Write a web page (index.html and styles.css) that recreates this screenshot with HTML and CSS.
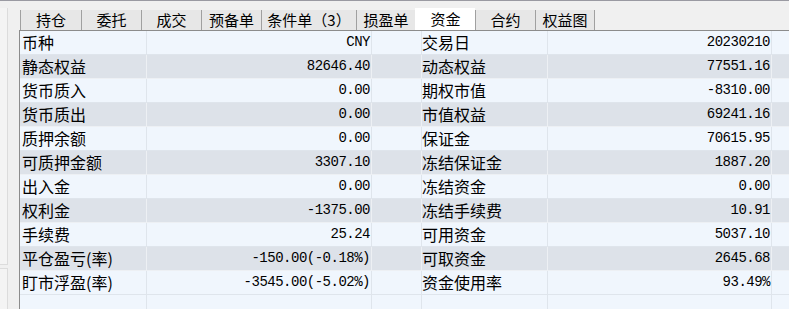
FILE: index.html
```html
<!DOCTYPE html>
<html lang="zh-CN">
  <head>
    <meta charset="UTF-8">
    <title>资金</title>
    <link rel="stylesheet" href="styles.css">
  </head>
  <body>
    <div class="topline"></div>
    <div class="frame">
      <div class="side">
        <div class="side-box upper"></div>
        <div class="side-box lower"></div>
      </div>
      <div class="main">
        <div class="tabs">
          <div class="tab">持仓</div>
          <div class="tab">委托</div>
          <div class="tab">成交</div>
          <div class="tab">预备单</div>
          <div class="tab wide">条件单（3）</div>
          <div class="tab narrow">损盈单</div>
          <div class="tab active">资金</div>
          <div class="tab">合约</div>
          <div class="tab last">权益图</div>
        </div>
        <div class="grid" id="grid"></div>
      </div>
    </div>
    <script>
      const rows = [
        ['币种', 'CNY', '交易日', '20230210'],
        ['静态权益', '82646.40', '动态权益', '77551.16'],
        ['货币质入', '0.00', '期权市值', '-8310.00'],
        ['货币质出', '0.00', '市值权益', '69241.16'],
        ['质押余额', '0.00', '保证金', '70615.95'],
        ['可质押金额', '3307.10', '冻结保证金', '1887.20'],
        ['出入金', '0.00', '冻结资金', '0.00'],
        ['权利金', '-1375.00', '冻结手续费', '10.91'],
        ['手续费', '25.24', '可用资金', '5037.10'],
        ['平仓盈亏(率)', '-150.00(-0.18%)', '可取资金', '2645.68'],
        ['盯市浮盈(率)', '-3545.00(-5.02%)', '资金使用率', '93.49%']
      ];
      const grid = document.getElementById('grid');

      function cell(text, cls) {
        const el = document.createElement('div');
        el.className = 'cell ' + cls;
        el.textContent = text;
        return el;
      }

      rows.forEach((r, i) => {
        const row = document.createElement('div');
        row.className = i % 2 ? 'row alt' : 'row';
        row.appendChild(cell(r[0], 'label'));
        row.appendChild(cell(r[1], 'value'));
        row.appendChild(cell('', 'blank'));
        row.appendChild(cell(r[2], 'label second'));
        row.appendChild(cell(r[3], 'value'));
        row.appendChild(cell('', 'rest'));
        grid.appendChild(row);
      });

      const filler = document.createElement('div');
      filler.className = 'row filler';
      ['label', 'value', 'blank', 'label', 'value', 'rest'].forEach(c => filler.appendChild(cell('', c)));
      grid.appendChild(filler);
    </script>
  </body>
</html>
```

FILE: styles.css
```css
:root {
  --bg: #f0f0f0;
  --tab-bg: #e7e7e7;
  --tab-line: #a0a0a0;
  --frame-line: #8c8c8c;
  --row-light: #f0f6fd;
  --row-dark: #dde2e9;
  --line-light: #dfe5ec;
  --line-dark: #edf0f4;
}

* {
  box-sizing: border-box;
}

body {
  margin: 0;
  background: var(--bg);
  font-family: "Noto Sans CJK SC", "DejaVu Sans", sans-serif;
  color: #000;
  height: 309px;
  overflow: hidden;
}

.topline {
  height: 1px;
  background: #9a9aa2;
}

.frame {
  display: flex;
  height: 308px;
}

.side {
  width: 19px;
  flex-shrink: 0;
  display: flex;
  flex-direction: column;
}

.side-box {
  width: 8px;
  background: #f4f4f4;
  border-right: 1px solid #dcdcdc;
}

.side-box.upper {
  margin-top: 7px;
  height: 257px;
  border-bottom: 1px solid #dcdcdc;
}

.side-box.lower {
  margin-top: 3px;
  flex: 1;
  border-top: 1px solid #dcdcdc;
}

.main {
  flex: 1;
  display: flex;
  flex-direction: column;
  min-width: 0;
}

.tabs {
  display: flex;
  align-items: flex-end;
  height: 30px;
  padding-left: 1px;
  border-bottom: 1px solid var(--frame-line);
}

.tab {
  width: 60px;
  height: 20px;
  background: var(--tab-bg);
  border-left: 1px solid var(--tab-line);
  font-size: 15px;
  line-height: 20px;
  text-align: center;
  white-space: nowrap;
}

.tab:first-child {
  width: 61px;
}

.tab.wide {
  width: 95px;
}

.tab.narrow {
  width: 59px;
}

.tab.active {
  height: 22px;
  line-height: 22px;
  background: #fff;
  border-left-color: #fff;
}

.tab.last {
  border-right: 1px solid var(--tab-line);
}

.grid {
  flex: 1;
  display: flex;
  flex-direction: column;
  border-left: 1px solid var(--frame-line);
}

.row {
  display: grid;
  grid-template-columns: 127px 225px 50px 126px 224px 1fr;
  height: 24px;
  background: var(--row-light);
  border-bottom: 1px solid var(--line-light);
}

.row.alt {
  background: var(--row-dark);
  border-bottom-color: var(--line-dark);
}

.row.filler {
  flex: 1;
  border-bottom: none;
}

.cell {
  border-right: 1px solid var(--line-light);
  font-size: 16px;
  line-height: 22px;
  white-space: nowrap;
}

.row.alt .cell {
  border-right-color: var(--line-dark);
}

.cell.label {
  padding-left: 2px;
}

.cell.second {
  padding-left: 0;
}

.cell.value {
  text-align: right;
  padding-right: 1px;
  font-family: "Liberation Mono", monospace;
  font-size: 14px;
  letter-spacing: -0.5px;
  line-height: 22px;
}

.cell.rest {
  border-right: none;
}
```
